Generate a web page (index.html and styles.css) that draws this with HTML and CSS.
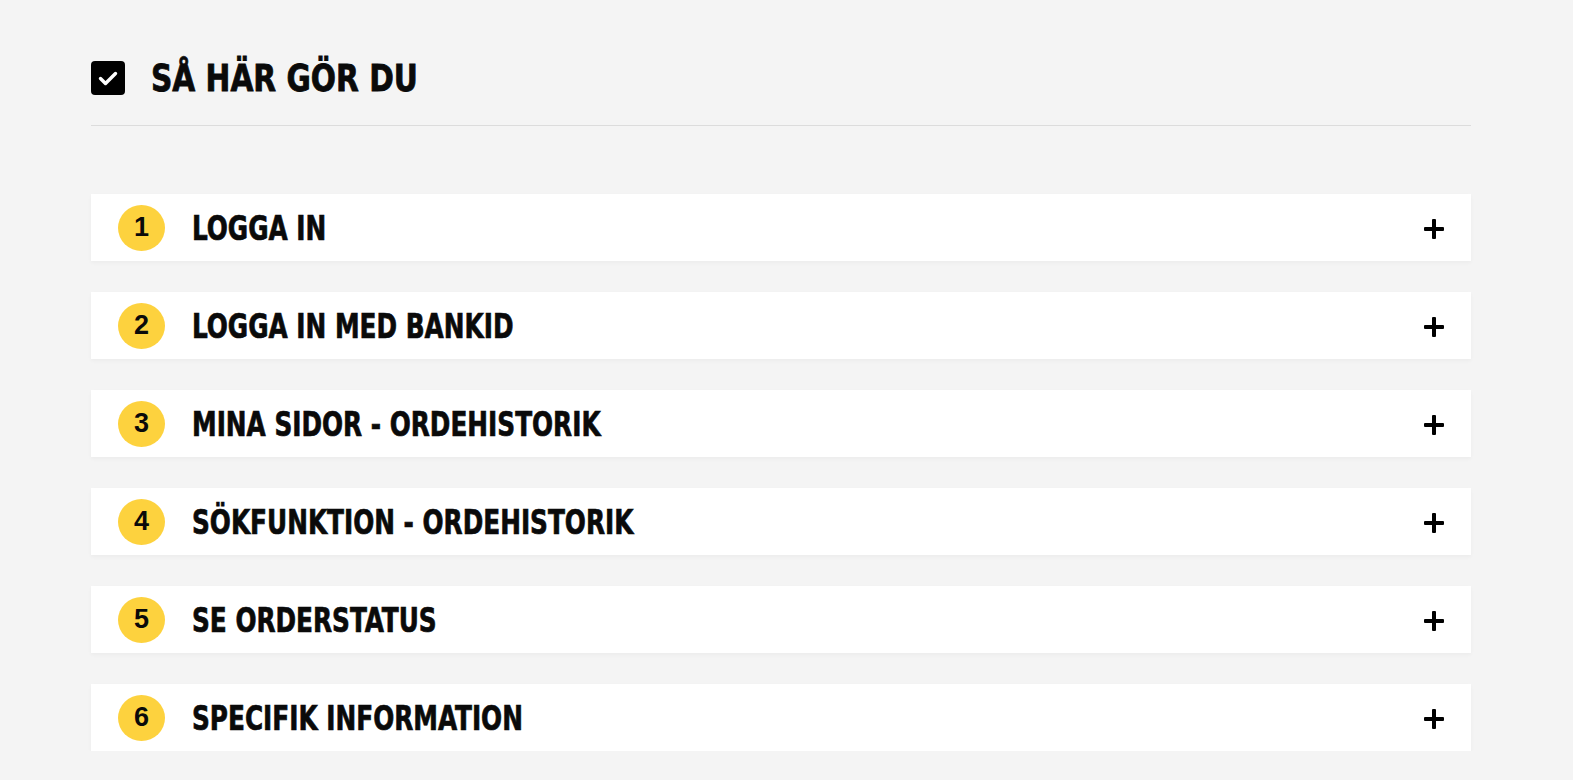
FILE: index.html
```html
<!DOCTYPE html>
<html lang="sv">
<head>
<meta charset="utf-8">
<title>Så här gör du</title>
<link rel="stylesheet" href="styles.css">
</head>
<body>
<main class="page">
  <header class="section-head">
    <span class="check-box">
      <svg viewBox="0 0 34 34" width="34" height="34" aria-hidden="true"><path d="M9.5 17.5 L14.5 22.5 L24.5 12.5" fill="none" stroke="#fff" stroke-width="3.4" stroke-linecap="round" stroke-linejoin="round"/></svg>
    </span>
    <h1 class="section-title"><span class="narrow narrow-title">SÅ HÄR GÖR DU</span></h1>
  </header>
  <ul class="steps">
    <li class="step"><span class="step-num">1</span><span class="step-title"><span class="narrow">LOGGA IN</span></span><span class="plus"></span></li>
    <li class="step"><span class="step-num">2</span><span class="step-title"><span class="narrow">LOGGA IN MED BANKID</span></span><span class="plus"></span></li>
    <li class="step"><span class="step-num">3</span><span class="step-title"><span class="narrow">MINA SIDOR - ORDEHISTORIK</span></span><span class="plus"></span></li>
    <li class="step"><span class="step-num">4</span><span class="step-title"><span class="narrow">SÖKFUNKTION - ORDEHISTORIK</span></span><span class="plus"></span></li>
    <li class="step"><span class="step-num">5</span><span class="step-title"><span class="narrow">SE ORDERSTATUS</span></span><span class="plus"></span></li>
    <li class="step"><span class="step-num">6</span><span class="step-title"><span class="narrow">SPECIFIK INFORMATION</span></span><span class="plus"></span></li>
  </ul>
</main>
</body>
</html>
```
FILE: styles.css
```css
* { box-sizing: border-box; }
html, body { margin: 0; padding: 0; }
body {
  background: #f4f4f4;
  color: #0a0a0a;
  font-family: "DejaVu Sans Condensed", "DejaVu Sans", sans-serif;
}
.page {
  padding: 61px 0 0 91px;
  width: 1471px;
}
.section-head {
  display: flex;
  align-items: center;
  gap: 26px;
  padding-bottom: 30px;
  border-bottom: 1px solid #dcdcdc;
}
.check-box {
  width: 34px;
  height: 34px;
  background: #000;
  border-radius: 4px;
  display: block;
  flex: none;
}
.check-box svg { display: block; }
.section-title {
  margin: 0;
  font-size: 38px;
  line-height: 34px;
  font-weight: 700;
}
.narrow {
  display: inline-block;
  transform: scaleX(0.81);
  transform-origin: left center;
  -webkit-text-stroke: 0.7px #0a0a0a;
  white-space: nowrap;
}
.narrow-title {
  transform: scaleX(0.867);
  -webkit-text-stroke: 0.8px #0a0a0a;
}
.steps {
  list-style: none;
  margin: 68px 0 0;
  padding: 0;
  display: flex;
  flex-direction: column;
  gap: 31px;
}
.step {
  height: 67px;
  background: #fff;
  display: flex;
  align-items: center;
  padding: 0 27px 0 27px;
  box-shadow: 0 2px 4px rgba(0,0,0,0.035);
}
.step-num {
  width: 47px;
  height: 46px;
  border-radius: 50%;
  background: #fdd23e;
  display: flex;
  align-items: center;
  justify-content: center;
  font-family: "Liberation Sans", Arial, sans-serif;
  font-weight: 700;
  font-size: 27px;
  line-height: 1;
  flex: none;
}
.step-title {
  margin-left: 27px;
  font-size: 34px;
  font-weight: 700;
  flex: 1;
  line-height: 1;
}
.plus {
  position: relative;
  width: 20px;
  height: 20px;
  flex: none;
  margin-top: 3px;
}
.plus::before, .plus::after {
  content: "";
  position: absolute;
  background: #000;
  border-radius: 1px;
}
.plus::before { left: 0; right: 0; top: 8px; height: 4px; }
.plus::after { top: 0; bottom: 0; left: 8px; width: 4px; }
```
